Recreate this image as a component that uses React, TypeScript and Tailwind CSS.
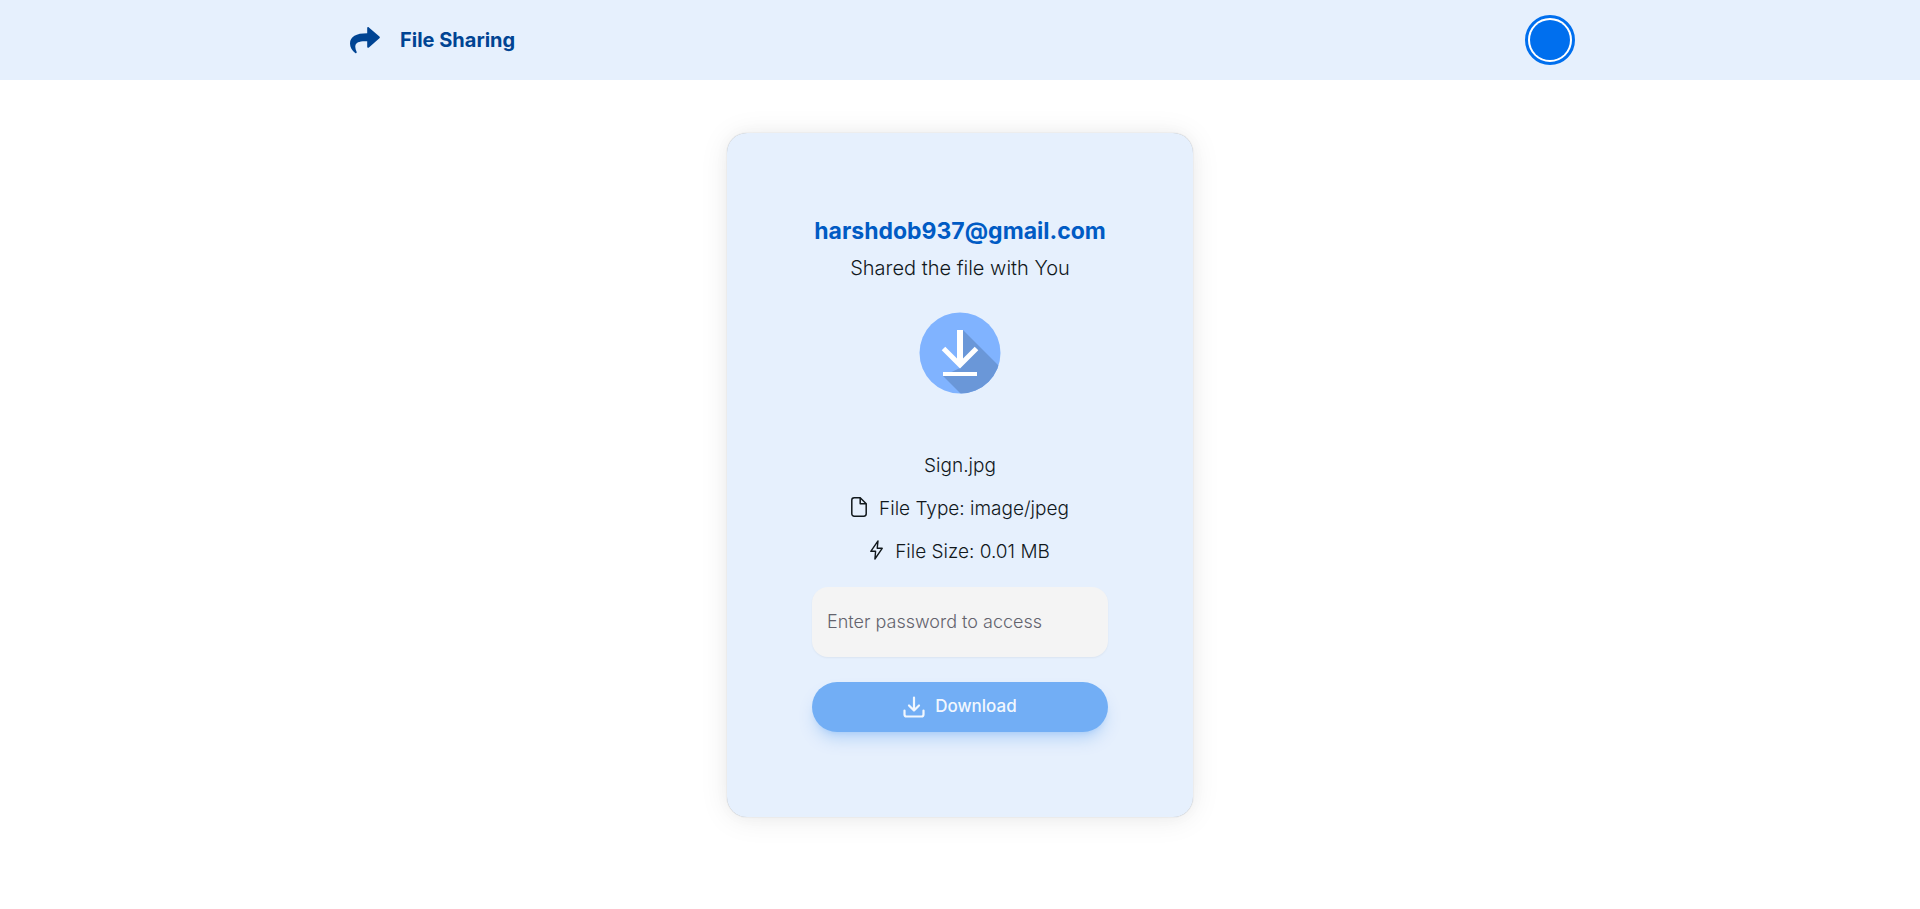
import { useState } from "react";

function ShareIcon() {
  return (
    <svg viewBox="0 0 30 27" className="h-[27px] w-[30px]" fill="currentColor" aria-hidden="true">
      <path d="M17.2 0.8C17.2 0 18.2 -0.2 18.9 0.4L29.4 9.4C30 10 30 10.8 29.4 11.3L18.9 20.4C18.2 21 17.2 20.9 17.2 20.1V14.2C9.4 13.8 6 15.4 5.4 18.4C5 20.6 5.6 22.6 6.6 24.8C7 25.8 6.2 26.6 5.2 26C2 23.6 0 20.2 0 16.4C0.2 9.4 6 6.2 17.2 6.2Z" />
    </svg>
  );
}

function FileIcon() {
  return (
    <svg viewBox="0 0 16 20" className="mt-0.5 h-5 w-4" fill="none" stroke="currentColor" strokeWidth="1.5" strokeLinejoin="round" aria-hidden="true">
      <path d="M9.2 0.8H3.2A2.4 2.4 0 0 0 0.8 3.2V16.8A2.4 2.4 0 0 0 3.2 19.2H12.8A2.4 2.4 0 0 0 15.2 16.8V6.8Z" />
      <path d="M9.2 0.8V6.8H15.2" />
    </svg>
  );
}

function BoltIcon() {
  return (
    <svg viewBox="0 0 13 20" className="mt-0.5 h-5 w-[13px]" fill="none" stroke="currentColor" strokeWidth="1.4" strokeLinejoin="round" aria-hidden="true">
      <path d="M8 0.9L0.8 11.3H5.6L4.9 19L12.2 8.3H7.2Z" />
    </svg>
  );
}

function TrayIcon() {
  return (
    <svg viewBox="0 0 22 22" className="h-[22px] w-[22px]" fill="none" stroke="currentColor" strokeWidth="2.2" strokeLinecap="round" strokeLinejoin="round" aria-hidden="true">
      <path d="M11 1.5V14.5M6 9.5L11 14.5L16 9.5M1.5 14.5V18.5A2 2 0 0 0 3.5 20.5H18.5A2 2 0 0 0 20.5 18.5V14.5" />
    </svg>
  );
}

function DownloadBadge() {
  return (
    <svg viewBox="0 0 82 82" className="size-[82px]" aria-hidden="true">
      <defs>
        <clipPath id="disc">
          <circle cx="41" cy="41" r="40.5" />
        </clipPath>
      </defs>
      <circle cx="41" cy="41" r="40.5" fill="#80b3ff" />
      <path d="M44 18L90 64V90H50L24 64L41 56Z" fill="#6a97d8" clipPath="url(#disc)" />
      <path d="M41 18V52" fill="none" stroke="#fff" strokeWidth="6" />
      <path d="M24.5 36.5L41 53L57.5 36.5" fill="none" stroke="#fff" strokeWidth="5" />
      <path d="M24 62H58" stroke="#fff" strokeWidth="4" />
    </svg>
  );
}

export default function App() {
  const [password, setPassword] = useState("");
  return (
    <div className="min-h-screen bg-white font-['Inter',sans-serif] text-[#11181c]">
      <header className="bg-[#e6f0fd]">
        <nav className="mx-auto flex h-20 max-w-[1280px] items-center justify-between px-[25px]">
          <a href="#home" className="flex items-center gap-5 pl-[5px] text-[#004493]">
            <ShareIcon />
            <span className="text-xl font-bold">File Sharing</span>
          </a>
          <button
            type="button"
            aria-label="Account"
            className="flex size-[50px] items-center justify-center rounded-full border-[3px] border-[#006fee] bg-white"
          >
            <span className="size-10 rounded-full bg-[#006fee]" />
          </button>
        </nav>
      </header>
      <main className="flex justify-center px-4 pt-[53px] pb-8">
        <section className="flex w-full max-w-[466px] flex-col items-center rounded-[20px] bg-[#e6f0fd] px-4 pt-20 pb-[85px] text-center shadow-[0_0_15px_rgb(0_0_0/0.03),0_2px_30px_rgb(0_0_0/0.08),0_0_1px_rgb(0_0_0/0.3)] sm:px-[85px]">
          <h1 className="text-[23px] leading-9 font-bold text-[#005bc4]">harshdob937@gmail.com</h1>
          <p className="mt-1 text-xl leading-[30px] font-light">Shared the file with You</p>
          <div className="mt-[29px]">
            <DownloadBadge />
          </div>
          <div className="mt-[58px] flex flex-col items-center gap-[15px] text-[19px] leading-7 font-light">
            <p>Sign.jpg</p>
            <p className="flex items-start gap-3">
              <FileIcon />
              File Type: image/jpeg
            </p>
            <p className="flex items-start gap-3">
              <BoltIcon />
              File Size: 0.01 MB
            </p>
          </div>
          <input
            type="password"
            aria-label="Enter password to access"
            placeholder="Enter password to access"
            value={password}
            onChange={(e) => setPassword(e.target.value)}
            className="mt-[21px] h-[70px] w-full rounded-[16px] bg-[#f4f4f4] px-[15px] pb-0.5 text-lg font-light shadow-xs outline-none placeholder:text-[#63636d]"
          />
          <button
            type="button"
            disabled={!password}
            className="mt-[25px] flex h-[50px] w-full items-center justify-center gap-[10px] rounded-full bg-[#006fee] text-[17px] font-medium text-white shadow-[0_10px_15px_-3px_rgb(0_111_238/0.4),0_4px_6px_-4px_rgb(0_111_238/0.4)] disabled:opacity-50"
          >
            <TrayIcon />
            Download
          </button>
        </section>
      </main>
    </div>
  );
}
